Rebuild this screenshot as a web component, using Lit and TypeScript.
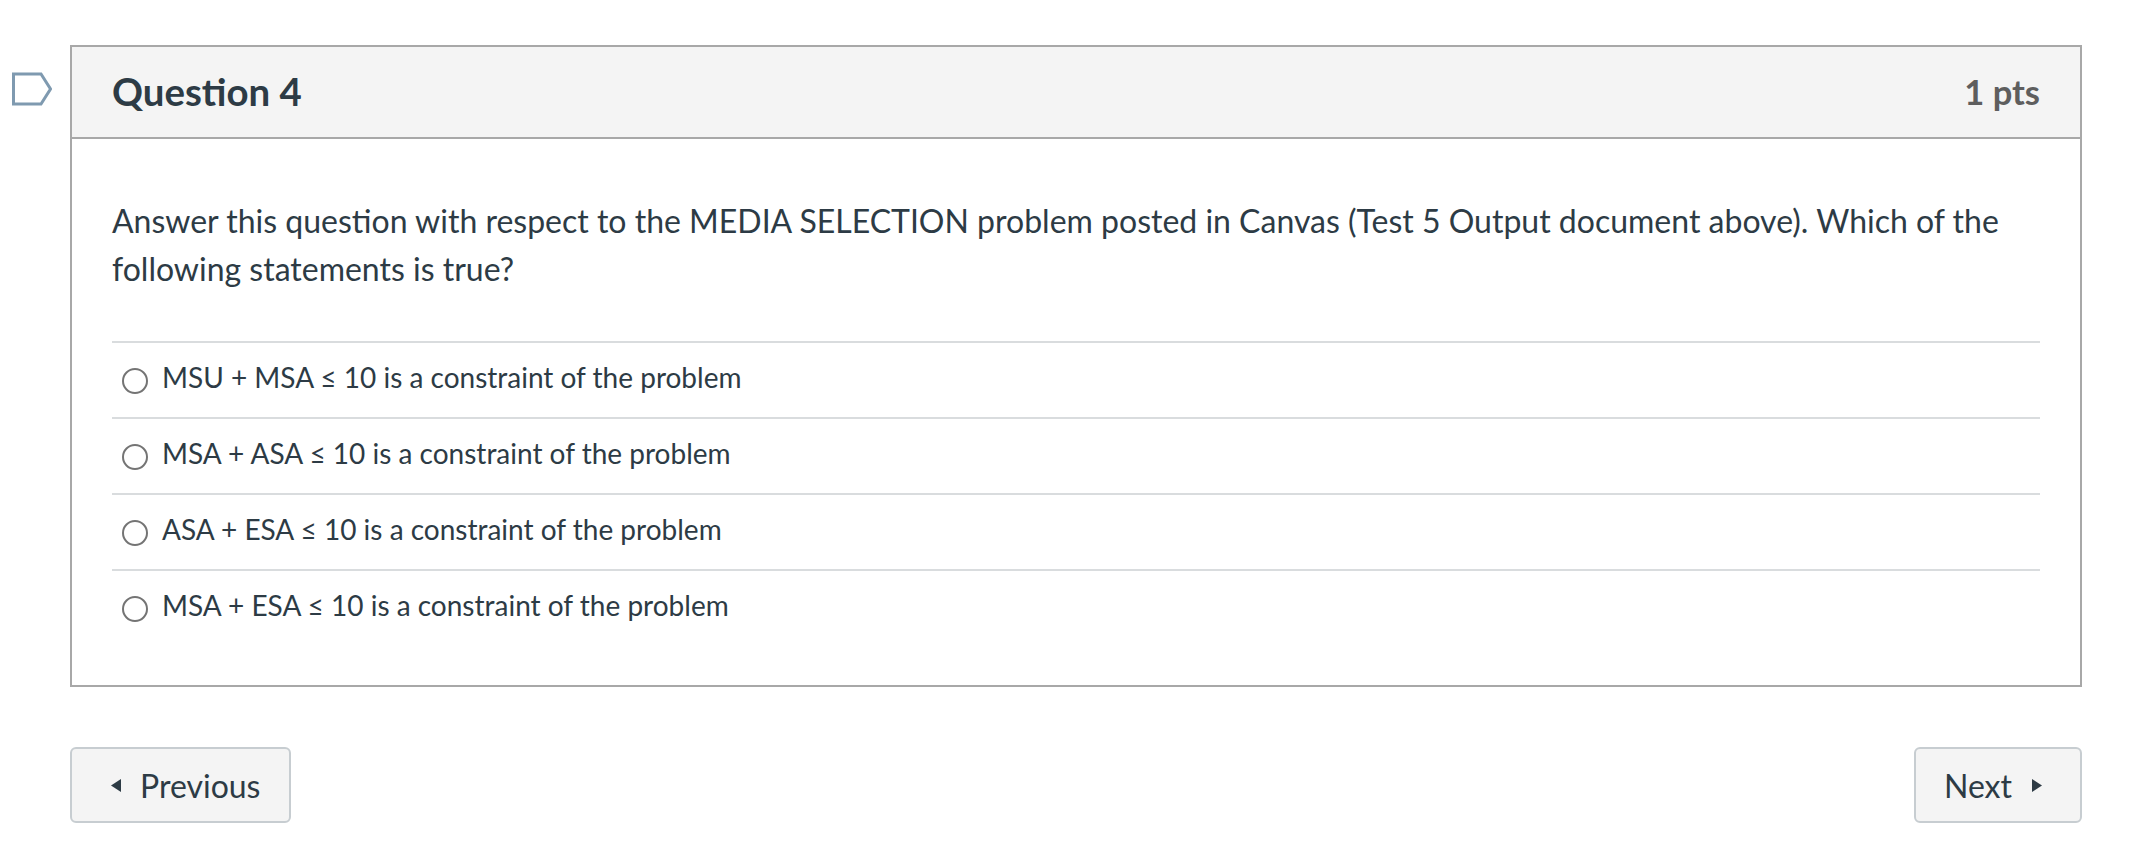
import { LitElement, html, css } from 'lit';
import { customElement } from 'lit/decorators.js';

const answers = [
  'MSU + MSA ≤ 10 is a constraint of the problem',
  'MSA + ASA ≤ 10 is a constraint of the problem',
  'ASA + ESA ≤ 10 is a constraint of the problem',
  'MSA + ESA ≤ 10 is a constraint of the problem',
];

@customElement('app-root')
export class AppRoot extends LitElement {
  static styles = css`
    :host {
      display: block;
      height: 858px;
      background: #fff;
      font-family: Lato, "Open Sans", sans-serif;
      color: #2d3b45;
      overflow: hidden;
    }
    .page {
      display: flex;
      flex-direction: column;
      padding: 45px 64px 0 12px;
    }
    .question {
      display: flex;
      align-items: flex-start;
    }
    .flag {
      width: 40px;
      height: 34px;
      margin: 27px 18px 0 0;
      flex: none;
    }
    .card {
      flex: 1;
      border: 2px solid #a8a8a8;
    }
    .header {
      display: flex;
      justify-content: space-between;
      align-items: center;
      box-sizing: border-box;
      height: 92px;
      padding: 0 40px 2px;
      background: #f4f4f4;
      border-bottom: 2px solid #a8a8a8;
    }
    .title {
      font-size: 38.4px;
      font-weight: 700;
    }
    .pts {
      font-size: 34.5px;
      font-weight: 700;
      color: #5e5e5e;
    }
    .body {
      padding: 58px 40px 40px;
    }
    .text {
      font-size: 32px;
      line-height: 48px;
      margin-bottom: 48px;
    }
    .answer {
      display: flex;
      align-items: center;
      height: 74px;
      border-top: 2px solid #d9dcde;
      padding-left: 10px;
      font-size: 28px;
    }
    .answer span:last-child {
      margin-bottom: 6px;
    }
    .radio {
      width: 26px;
      height: 26px;
      box-sizing: border-box;
      border: 2px solid #747474;
      border-radius: 50%;
      margin: 2px 14px 0 0;
      flex: none;
    }
    .nav {
      display: flex;
      justify-content: space-between;
      margin: 60px 0 0 58px;
    }
    .btn {
      display: flex;
      align-items: center;
      box-sizing: border-box;
      height: 76px;
      background: #f4f4f4;
      border: 2px solid #c7cdd1;
      border-radius: 6px;
      font-size: 32px;
    }
    .prev {
      width: 221px;
      padding-left: 39px;
      gap: 19px;
    }
    .next {
      width: 168px;
      padding-left: 28px;
      gap: 20px;
    }
    .btn svg {
      width: 10px;
      height: 13px;
      fill: #2d3b45;
    }
  `;

  render() {
    return html`
      <div class="page">
        <div class="question">
          <svg class="flag" viewBox="0 0 40 34">
            <path d="M1.5 2 H29 L38.5 17 L29 32 H1.5 Z" fill="#fff" stroke="#7f9ab0" stroke-width="3" />
          </svg>
          <div class="card">
            <div class="header">
              <span class="title">Question 4</span>
              <span class="pts">1 pts</span>
            </div>
            <div class="body">
              <div class="text">
                Answer this question with respect to the MEDIA SELECTION problem posted in Canvas (Test 5 Output document above). Which of the following statements is true?
              </div>
              ${answers.map(
                (a) => html`<div class="answer"><span class="radio"></span><span>${a}</span></div>`
              )}
            </div>
          </div>
        </div>
        <div class="nav">
          <div class="btn prev">
            <svg viewBox="0 0 10 13"><path d="M10 0 V13 L0 6.5 Z" /></svg>
            <span>Previous</span>
          </div>
          <div class="btn next">
            <span>Next</span>
            <svg viewBox="0 0 10 13"><path d="M0 0 V13 L10 6.5 Z" /></svg>
          </div>
        </div>
      </div>
    `;
  }
}
